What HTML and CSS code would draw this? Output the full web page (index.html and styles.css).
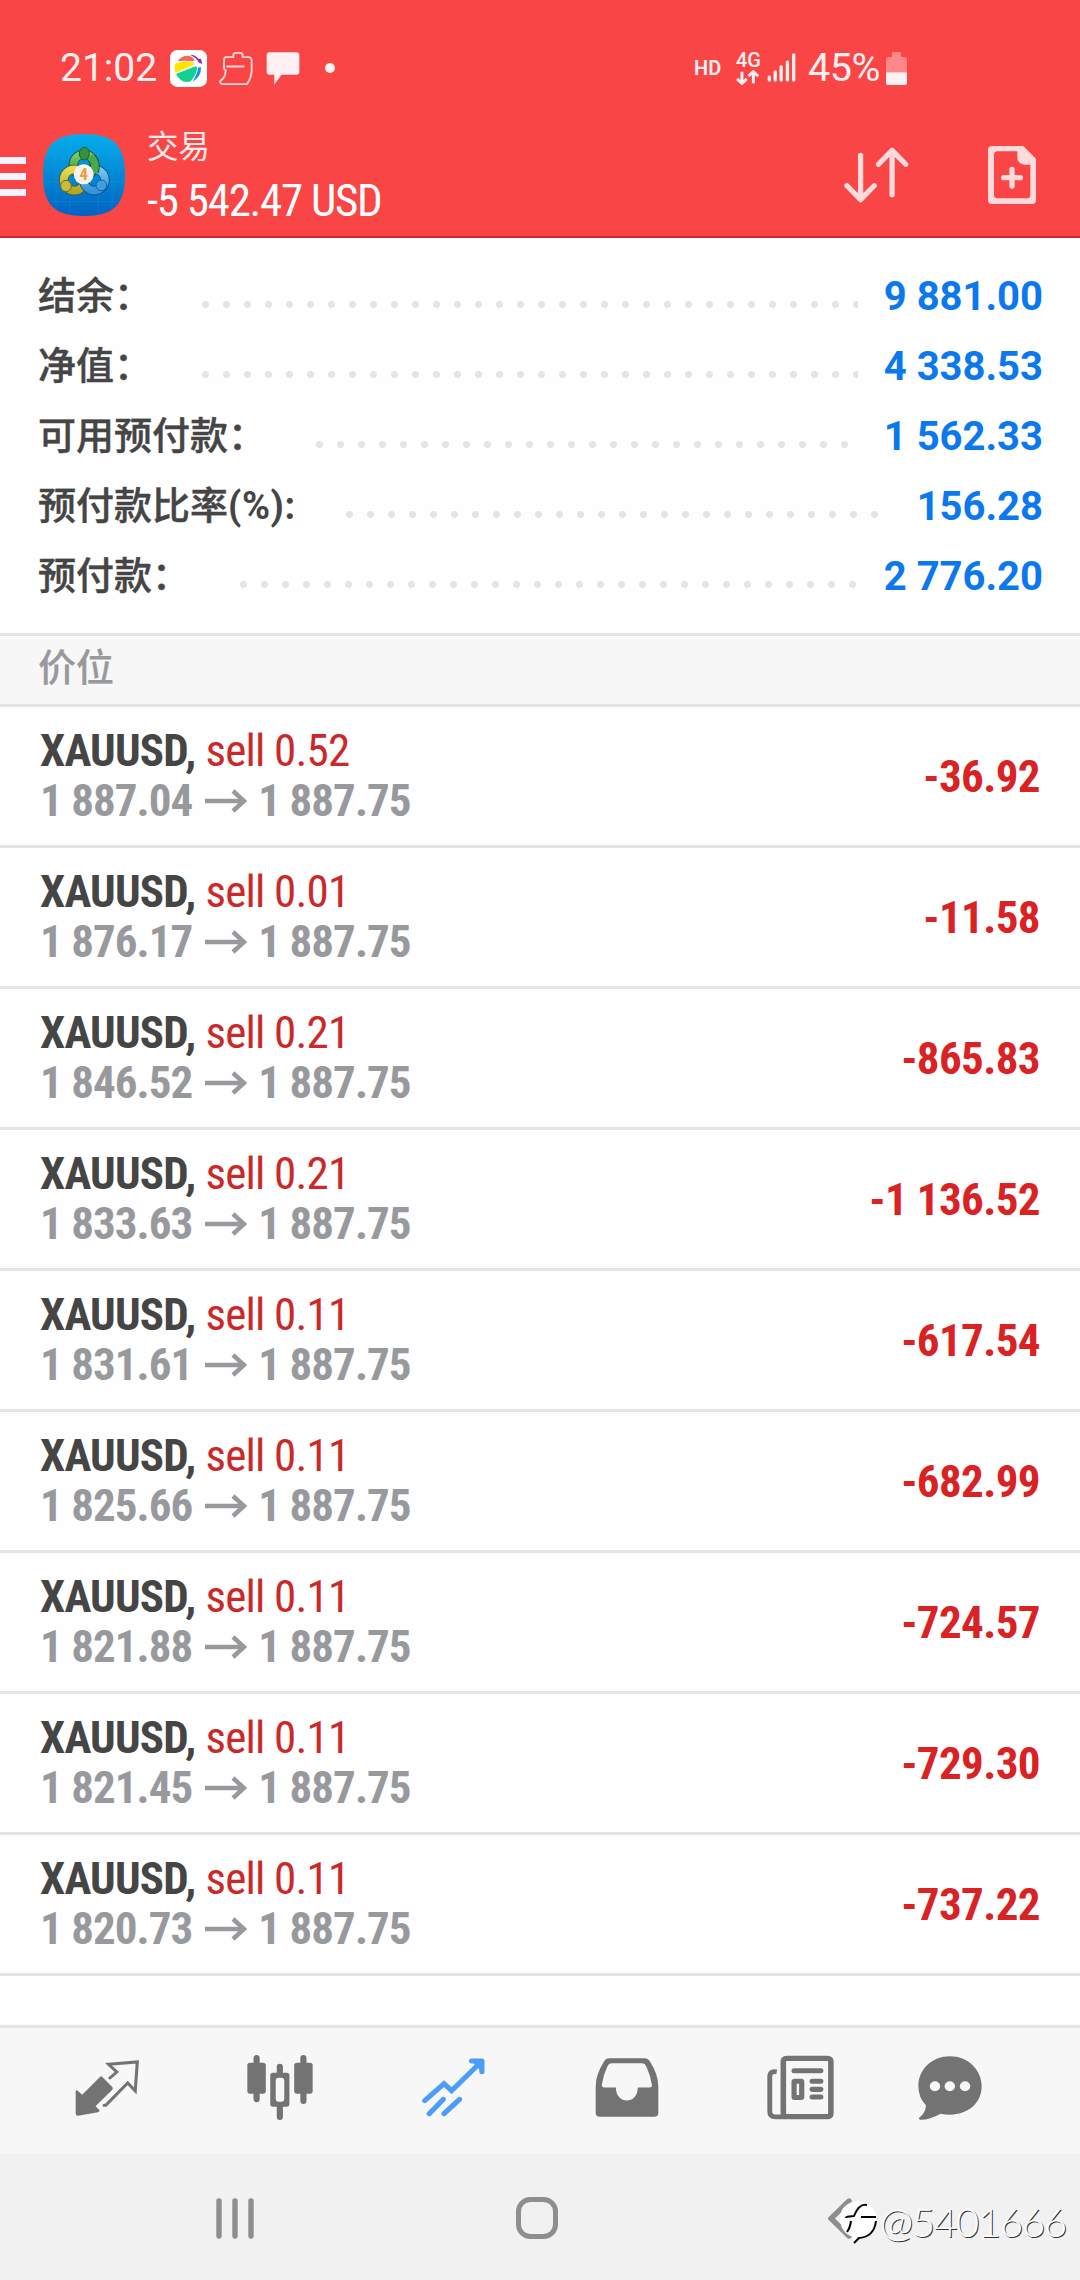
FILE: index.html
```html
<!DOCTYPE html>
<html lang="zh-CN">
<head>
<meta charset="utf-8">
<title>交易</title>
<link rel="stylesheet" href="styles.css">
</head>
<body>
<header class="header">
  <div class="status">
    <span class="clock">21:02</span>
    <svg class="ball" viewBox="30 27 111 111" width="37" height="37">
      <rect x="30" y="27" width="111" height="111" rx="22" fill="#fff"/>
      <path d="M53 61Q62 44 84 44Q98 45 103 56Q103 61 98 61Q75 57 53 61Z" fill="#f4695c"/>
      <path d="M89 41Q107 41 116 54L122 53L124 58L127 69L117 65Q109 49 89 41Z" fill="#9b26b0"/>
      <path d="M47 67Q74 57 102 65Q104 70 99 72L46 95Q41 80 47 67Z" fill="#ffe500"/>
      <path d="M48 99L106 76Q112 76 112 83Q105 107 92 121Q63 129 48 99Z" fill="#12d18e"/>
      <path d="M115 79H123Q124 108 97 122Q111 103 115 79Z" fill="#158fea"/>
    </svg>
    <svg class="broom" viewBox="176 30 102 104" width="34" height="35" fill="none" stroke="#ffd9d9" stroke-width="5.6" stroke-linejoin="round">
      <path d="M197 48H219V43Q219 35 226 35H240Q247 35 247 43V48H263Q274 48 274 59V87Q274 107 260 129H189Q177 128 180 119Q196 109 196 87L191 83V57Q191 48 197 48ZM198 76H252"/>
    </svg>
    <svg class="chat" viewBox="317 36 101 100" width="34" height="33"><path d="M327 37H408Q417 37 417 46V96Q417 105 408 105H363L341 135V105H327Q318 105 318 96V46Q318 37 327 37Z" fill="#fff1f1"/></svg>
    <i class="dot"></i>
    <span class="hd">HD</span>
    <span class="net">
      <b class="gen">4G</b>
      <svg viewBox="230 116 70 46" width="23" height="15" fill="none" stroke="#fff0f0" stroke-width="9"><path d="M248 121V155M233 143L248 157L263 143M283 157V123M268 135L283 121L298 135"/></svg>
    </span>
    <svg class="signal" viewBox="321 70 88 88" width="29" height="29" stroke="#fff0f0" stroke-width="10" stroke-linecap="round"><path d="M328 143V152M346 127V152M364 112V152M383 98V152M402 76V152"/></svg>
    <span class="percent">45%</span>
    <svg class="battery" viewBox="678 60 63 99" width="21" height="33"><path d="M696 60H723V75H735Q741 75 741 81V121H678V81Q678 75 684 75H696Z" fill="#fd8887"/><path d="M678 121H741V152Q741 159 735 159H684Q678 159 678 152Z" fill="#fff1f1"/></svg>
  </div>
  <div class="appbar">
    <div class="menu"><i></i><i></i><i></i></div>
    <svg class="logo" viewBox="9 12 246 246" width="82" height="82">
      <defs>
        <linearGradient id="bg" x1="0" y1="0" x2="0" y2="1"><stop offset="0" stop-color="#05aeec"/><stop offset="1" stop-color="#0063c0"/></linearGradient>
        <linearGradient id="gn" x1="0" y1="0" x2="0" y2="1"><stop offset="0" stop-color="#7cc870"/><stop offset="1" stop-color="#2f9139"/></linearGradient>
        <linearGradient id="yl" x1="0" y1="0" x2="0" y2="1"><stop offset="0" stop-color="#e8db54"/><stop offset="1" stop-color="#b5a628"/></linearGradient>
        <linearGradient id="bl" x1="0" y1="0" x2="0" y2="1"><stop offset="0" stop-color="#79c6f0"/><stop offset="1" stop-color="#3294da"/></linearGradient>
      </defs>
      <path d="M132 12C220 12 255 45 255 135S220 258 132 258S9 225 9 135S44 12 132 12Z" fill="url(#bg)"/>
      <path d="M48 30V240M90 14V256M174 14V256M216 30V240M20 72H244M11 114H253M11 156H253M20 215H244" stroke="#45b5ee" stroke-opacity=".22" stroke-width="2" fill="none"/>
      <g fill="none">
        <circle cx="132" cy="105" r="32" stroke="#12542b" stroke-width="28"/>
        <circle cx="132" cy="105" r="32" stroke="url(#gn)" stroke-width="23"/>
        <circle cx="103" cy="150" r="32" stroke="#5b5716" stroke-width="28"/>
        <circle cx="103" cy="150" r="32" stroke="url(#yl)" stroke-width="23"/>
        <circle cx="163" cy="150" r="32" stroke="#0c467b" stroke-width="28"/>
        <circle cx="163" cy="150" r="32" stroke="url(#bl)" stroke-width="23"/>
        <path d="M154 83Q170 101 163 125" stroke="#12542b" stroke-width="28"/>
        <path d="M151 79Q172 100 162 127" stroke="#4ba650" stroke-width="23"/>
      </g>
      <ellipse cx="133" cy="71" rx="15" ry="19" fill="#37923d" stroke="#175e28" stroke-width="3"/>
      <ellipse cx="78" cy="168" rx="16" ry="17" fill="#c9bb3c" stroke="#766c18" stroke-width="3"/>
      <ellipse cx="184" cy="166" rx="16" ry="16" fill="#3f9fe0" stroke="#15609c" stroke-width="3"/>
      <circle cx="131" cy="133" r="30" fill="#f6f3ee"/>
      <text x="131" y="151" class="four">4</text>
    </svg>
    <div class="titles"><div class="title">交易</div><div class="total">-5 542.47 USD</div></div>
    <svg class="sort" viewBox="552 349 194 169" width="65" height="56" fill="none" stroke="#ffdada" stroke-width="16" stroke-linecap="round" stroke-linejoin="round"><path d="M601 374V507M560 466L601 508L642 466M696 493V361M655 401L696 359L737 401"/></svg>
    <svg class="add" viewBox="984 348 144 174" width="48" height="58"><path fill-rule="evenodd" fill="#ffdada" d="M996 348H1090L1128 386V510Q1128 522 1116 522H996Q984 522 984 510V360Q984 348 996 348ZM1012 364Q1002 364 1002 376V494Q1002 505 1014 505H1100Q1111 505 1111 494V404H1092Q1072 402 1072 382V364Z"/><path d="M1056 418V468M1031 443H1081" stroke="#ffdada" stroke-width="16" stroke-linecap="round"/></svg>
  </div>
</header>

<section class="summary">
  <div class="line"><span class="label">结余：</span><i class="leader"></i><span class="value">9 881.00</span></div>
  <div class="line"><span class="label">净值：</span><i class="leader"></i><span class="value">4 338.53</span></div>
  <div class="line"><span class="label">可用预付款：</span><i class="leader"></i><span class="value">1 562.33</span></div>
  <div class="line"><span class="label">预付款比率<span class="unit">(%):</span></span><i class="leader"></i><span class="value">156.28</span></div>
  <div class="line"><span class="label">预付款：</span><i class="leader"></i><span class="value">2 776.20</span></div>
</section>

<h2 class="section">价位</h2>

<main class="positions" id="positions"></main>

<nav class="tabs">
  <svg viewBox="219 154 187 168" width="64" height="56" preserveAspectRatio="none"><path d="M294 203Q298 203 301 207L328 235Q331 239 328 243L279 293L290 304Q292 309 286 311L228 321Q221 321 221 315V248Q222 243 227 246L240 258Z" fill="#737373"/><path d="M321 208L341 190L317 167L401 160L395 247L373 223L309 290H304" fill="none" stroke="#737373" stroke-width="9" stroke-linecap="round"/></svg>
  <svg viewBox="717 139 193 195" width="66" height="65" preserveAspectRatio="none"><path d="M745 148V272M882 148V277M813 174V200M813 290V325" stroke="#737373" stroke-width="18" stroke-linecap="round"/><rect x="718" y="162" width="54" height="93" rx="8" fill="#737373"/><rect x="855" y="162" width="54" height="93" rx="8" fill="#737373"/><rect x="785" y="192" width="56" height="102" rx="8" fill="#737373"/><rect x="801" y="207" width="25" height="72" rx="9" fill="#f7f7f7"/></svg>
  <svg viewBox="1225 146 183 177" width="63" height="59" preserveAspectRatio="none" fill="none" stroke="#4b9df5" stroke-width="15" stroke-linecap="round"><path d="M1233 274L1289 223L1311 244L1394 160M1246 313L1287 270M1289 313L1334 270"/><path d="M1368 154H1398V187Z" fill="#4b9df5" stroke="none"/><path d="M1369 155H1399V187" stroke-linejoin="round"/></svg>
  <svg viewBox="160 146 187 176" width="64" height="59" preserveAspectRatio="none"><path fill="#737373" fill-rule="evenodd" d="M201 147H305Q315 147 321 157Q345 195 345 231V309Q345 321 333 321H174Q162 321 162 309V231Q162 195 186 157Q192 147 201 147ZM208 162Q200 162 196 171Q184 197 180 225Q179 234 188 234H221C221 286 285 286 285 234H319Q328 234 326 225Q322 198 310 171Q306 162 298 162Z"/></svg>
  <svg viewBox="663 137 193 193" width="67" height="65" preserveAspectRatio="none" fill="none" stroke="#737373"><rect x="710" y="147" width="137" height="173" rx="9" stroke-width="16"/><path d="M691 187Q671 184 671 201V305Q671 321 687 321H718" stroke-width="14"/><path d="M741 184H818M793 215H818M793 239H818M793 262H818" stroke-width="15" stroke-linecap="round"/><rect x="741" y="215" width="22" height="48" rx="2" stroke-width="15" stroke-linejoin="round"/></svg>
  <svg viewBox="1101 137 185 192" width="64" height="64" preserveAspectRatio="none"><path fill="#737373" d="M1193 138C1245 138 1285 178 1285 228C1285 278 1246 313 1193 313Q1178 313 1166 310Q1134 329 1107 328Q1101 326 1106 321Q1123 308 1124 285Q1102 262 1102 226C1103 176 1142 138 1193 138Z"/><g fill="#f7f7f7"><circle cx="1150" cy="228" r="15"/><circle cx="1193" cy="228" r="15"/><circle cx="1237" cy="228" r="15"/></g></svg>
</nav>

<footer class="sysnav">
  <svg viewBox="0 0 38 41" width="38" height="41"><path d="M3 3V38M19 3V38M35 3V38" stroke="#8e8e8e" stroke-width="5.4" stroke-linecap="round"/></svg>
  <svg viewBox="0 0 42 42" width="42" height="42"><rect x="2.5" y="2.5" width="37" height="37" rx="12" fill="none" stroke="#8e8e8e" stroke-width="5"/></svg>
  <svg class="back" viewBox="0 0 24 41" width="24" height="41"><path d="M21 3L3 20.5L21 38" fill="none" stroke="#8e8e8e" stroke-width="5.4" stroke-linecap="round"/></svg>
</footer>

<div class="watermark">
  <svg viewBox="836 2198 44 50" width="44" height="50">
    <path d="M840 2218C842 2197 874 2197 877 2219C876 2232 869 2238 860 2239L854 2245L853 2238Q840 2234 840 2218Z" fill="#fff"/>
    <path d="M846 2219C846 2217 849 2218 854 2217C858 2207 862 2205 867 2206M861 2218H876M851 2222Q850 2229 847 2233M876 2222Q874 2238 859 2239L854 2244" fill="none" stroke="#000" stroke-width="2"/>
  </svg>
  <span class="handle">@5401666</span>
</div>
<script src="positions.js"></script>
</body>
</html>
```
FILE: styles.css
```css
* { box-sizing: border-box; }

body {
  position: relative;
  display: flex;
  flex-direction: column;
  width: 1080px;
  height: 2280px;
  margin: 0;
  overflow: hidden;
  background: #fefefe;
  color: #454545;
  font-family: "Roboto", "Noto Sans CJK SC", sans-serif;
}

svg { display: block; flex: none; }

.header {
  height: 238px;
  border-bottom: 2px solid #c92a2b;
  background: #f94546;
  color: #fff;
}

.status {
  display: flex;
  align-items: center;
  height: 118px;
  padding: 18px 0 0 60px;
  color: #fff0f0;
}

.clock { width: 110px; font-size: 39px; line-height: 46px; }
.broom { margin-left: 12px; }
.chat { margin-left: 13px; }
.dot { width: 10px; height: 10px; margin-left: 25px; border-radius: 50%; background: #fff1f1; }
.hd { width: 42px; margin-left: 359px; font-size: 20px; font-weight: 600; }
.net { display: flex; flex-direction: column; width: 31px; gap: 1px; }
.gen { height: 18px; font-size: 20px; line-height: 18px; font-weight: 500; }
.signal { margin-top: -1px; }
.percent { width: 78px; margin-left: 12px; font-size: 39.5px; line-height: 46px; letter-spacing: -.5px; }

.appbar { display: flex; align-items: flex-start; height: 118px; }
.menu { display: flex; flex-direction: column; gap: 9px; width: 43px; padding-top: 39px; }
.menu i { width: 26px; height: 7px; background: #f7f1fb; }
.logo { margin-top: 16px; }
.four { fill: #ef9a3c; font: 700 50px "Roboto Condensed", sans-serif; text-anchor: middle; }
.titles { width: 719px; padding: 6px 0 0 22px; }
.title { height: 46px; font-size: 31.5px; line-height: 48px; color: #ffeaea; }
.total { font: 450 45px/62px "Roboto Condensed", sans-serif; letter-spacing: -1.3px; white-space: nowrap; }
.sort { margin-top: 29px; }
.add { margin: 28px 0 0 79px; }

.summary { height: 395px; padding: 23px 37px 0 38px; }
.line { display: flex; align-items: center; height: 70px; }
.label { font-size: 38px; line-height: 70px; font-weight: 500; white-space: nowrap; -webkit-text-stroke: .4px #454545; }
.unit { font-weight: 700; letter-spacing: .6px; -webkit-text-stroke: 0; }
.leader {
  flex: 1;
  height: 7px;
  margin: 17px 26px 0 50px;
  background: radial-gradient(circle at 3.5px 3.5px, #e4e4e4 3.1px, transparent 3.9px) 0 0 / 21px 7px repeat-x;
}
.value { padding-top: 2px; color: #0b78ee; font-size: 40px; font-weight: 700; line-height: 68px; }

.section {
  height: 74px;
  margin: 0;
  padding-left: 38px;
  border: solid #e4e4e4;
  border-width: 3px 0;
  background: linear-gradient(#fff 3px, #f7f7f7 3px);
  color: #98999d;
  font-size: 38px;
  font-weight: 500;
  line-height: 64px;
  -webkit-text-stroke: .2px #98999d;
}

.positions { height: 1318px; }
.position {
  display: flex;
  align-items: center;
  justify-content: space-between;
  height: 141px;
  padding: 0 40px;
  border-bottom: 3px solid #e4e4e4;
  font: 45px/50px "Roboto Condensed", sans-serif;
  letter-spacing: -.8px;
}
.symbol, .prices, .profit { font-weight: 700; }
.order { display: flex; gap: 10px; }
.side { color: #ca2829; }
.prices { display: flex; align-items: center; color: #98999d; letter-spacing: -.95px; }
.arrow { margin: 0 10px 0 13px; }
.profit { padding-top: 2px; color: #d82224; letter-spacing: -.6px; }

.tabs {
  display: grid;
  grid-template-columns: repeat(5, 173.4px) 127px;
  align-items: center;
  justify-items: center;
  height: 129px;
  padding: 0 0 7px 20px;
  border-top: 3px solid #e4e4e4;
  background: #f7f7f7;
}

.sysnav {
  display: flex;
  align-items: center;
  gap: 262px;
  height: 126px;
  padding: 2px 0 0 216px;
  background: #f1f1f1;
}
.back { margin-left: 8px; }

.watermark {
  position: absolute;
  left: 836px;
  top: 2195px;
  display: flex;
  align-items: center;
}
.handle {
  width: 198px;
  color: #fff;
  font: 300 40px/54px "Lato", sans-serif;
  letter-spacing: -1.2px;
  text-shadow: 1px 1px 0 #333;
}
```
FILE: positions.js
```javascript
const current = "1 887.75";
const positions = [
  ["0.52", "1 887.04", "-36.92"],
  ["0.01", "1 876.17", "-11.58"],
  ["0.21", "1 846.52", "-865.83"],
  ["0.21", "1 833.63", "-1 136.52"],
  ["0.11", "1 831.61", "-617.54"],
  ["0.11", "1 825.66", "-682.99"],
  ["0.11", "1 821.88", "-724.57"],
  ["0.11", "1 821.45", "-729.30"],
  ["0.11", "1 820.73", "-737.22"],
];

document.getElementById("positions").innerHTML = positions.map(([volume, open, profit]) => `
  <article class="position">
    <div>
      <div class="order"><span class="symbol">XAUUSD,</span><span class="side">sell ${volume}</span></div>
      <div class="prices"><span>${open}</span>
        <svg class="arrow" viewBox="0 0 43 24" width="43" height="24" fill="none" stroke="#98999d" stroke-width="4.4"><path d="M0 12H40M28 2L39 12L28 22"/></svg>
        <span>${current}</span></div>
    </div>
    <span class="profit">${profit}</span>
  </article>`).join("");
```
